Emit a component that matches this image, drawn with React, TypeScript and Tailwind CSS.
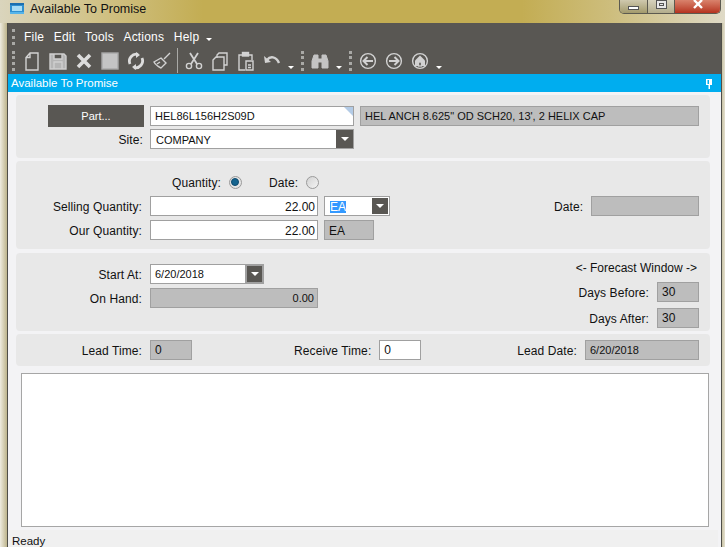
import type { ReactNode } from 'react';

const stroke = '#d2d2d2';

const Icon = ({ children }: { children: ReactNode }) => (
  <span className="w-[26px] h-[26px] flex items-center justify-center shrink-0">
    <svg width="20" height="20" viewBox="0 0 20 20" fill="none" stroke={stroke} strokeWidth="1.4">
      {children}
    </svg>
  </span>
);

const Grip = ({ className = '' }: { className?: string }) => (
  <div className={`w-[3px] border-l-[3px] border-dotted border-[#a9a9a6] shrink-0 ${className}`} />
);

const Caret = ({ className = '' }: { className?: string }) => (
  <span className={`block w-0 h-0 border-x-[3px] border-x-transparent border-t-[3px] border-t-white shrink-0 ${className}`} />
);

const Combo = ({ className = '' }: { className?: string }) => (
  <span className={`bg-[#595753] flex items-center justify-center shrink-0 ${className}`}>
    <Caret className="border-x-[4px] border-t-[4px]" />
  </span>
);

const Field = ({
  children,
  className = '',
  ro = false,
  right = false,
  small = false,
}: {
  children?: ReactNode;
  className?: string;
  ro?: boolean;
  right?: boolean;
  small?: boolean;
}) => (
  <div
    className={`h-[20px] border-[1px] border-[#a0a0a0] flex items-center px-[4px] leading-none shrink-0 ${
      small ? 'text-[11px]' : 'text-[12px]'
    } ${ro ? 'bg-[#bdbdbd]' : 'bg-white'} ${right ? 'justify-end' : ''} ${className}`}
  >
    {children}
  </div>
);

const Label = ({ children, className = '' }: { children: ReactNode; className?: string }) => (
  <span className={`text-[12px] leading-none tracking-[0.1px] pt-[2px] text-[#111] text-right shrink-0 ${className}`}>
    {children}
  </span>
);

const Radio = ({ on = false }: { on?: boolean }) => (
  <span
    className={`w-[13px] h-[13px] rounded-full border border-[#9a9a9a] flex items-center justify-center shrink-0 ${
      on ? 'bg-[#e4e4e4]' : 'bg-gradient-to-br from-[#d2d2d2] to-[#f4f4f4]'
    }`}
  >
    {on && <span className="w-[8px] h-[8px] rounded-full bg-[#15648f] border border-[#0d4a6e]" />}
  </span>
);

const Panel = ({ children, className = '' }: { children: ReactNode; className?: string }) => (
  <div className={`bg-[#e8e8e8] rounded-[4px] ${className}`}>{children}</div>
);

export default function App() {
  return (
    <div
      className="w-[728px] h-[547px] overflow-hidden flex flex-col bg-white text-[#111]"
      style={{ fontFamily: '"Liberation Sans", Arial, sans-serif' }}
    >
      {/* TITLE BAR */}
      <div className="h-[23px] w-[725px] shrink-0 flex bg-[linear-gradient(90deg,#dad5bd_0%,#d2c48c_12%,#c3ad53_28%,#c3ad53_72%,#cdbd7c_84%,#dfdac7_100%)]">
        <svg className="ml-[9px] mt-[2px]" width="16" height="14" viewBox="0 0 16 14">
          <rect x="1" y="1" width="14" height="11" rx="2" fill="#2f8fd0" />
          <rect x="3" y="4" width="10" height="5" fill="#a8dcf5" />
          <rect x="1" y="1" width="14" height="2" fill="#1c6fb0" />
          <rect x="1" y="10" width="14" height="2" fill="#55b4ea" />
        </svg>
        <span className="ml-[5px] mt-[2px] text-[12.5px] leading-[15px] text-[#111]">Available To Promise</span>
        <div className="ml-auto mr-[4px] w-[102px] h-[14px] flex border border-t-0 border-[#5c5a50] rounded-b-[5px] overflow-hidden">
          <div className="w-[28px] bg-gradient-to-b from-[#cfc9ae] to-[#a39a6c] border-r border-[#5c5a50] flex items-center justify-center">
            <span className="w-[11px] h-[4px] mt-[3px] bg-white border border-[#555]" />
          </div>
          <div className="w-[27px] bg-gradient-to-b from-[#d6d2bd] to-[#b3ad8c] border-r border-[#5c5a50] flex justify-center">
            <span className="w-[11px] h-[9px] bg-[#e8e8e8] border border-[#555] flex items-center justify-center">
              <span className="w-[5px] h-[3px] border border-[#555]" />
            </span>
          </div>
          <div className="flex-1 bg-gradient-to-b from-[#d9826c] to-[#b5311e] flex justify-center">
            <svg width="12" height="9" viewBox="0 0 12 9">
              <path d="M2 0 L10 8 M10 0 L2 8" stroke="#fff" strokeWidth="2.4" />
            </svg>
          </div>
        </div>
      </div>

      <div className="flex flex-1 min-h-0 w-[725px]">
        <div className="w-[8px] shrink-0 bg-gradient-to-r from-[#efece0] to-[#bdb48c] border-r border-[#4f4e48]" />

        <div className="w-[713px] shrink-0 flex flex-col bg-[#f3f3f5]">
          {/* MENU + TOOLBAR */}
          <div className="h-[51px] bg-[#595753] shrink-0 flex flex-col">
            <div className="h-[24px] flex items-center pl-[4px] pt-[3px]">
              <Grip className="h-[16px]" />
              <div className="flex items-center gap-[9.6px] ml-[9px] text-[12px] tracking-[0.2px] leading-none text-white">
                <span>File</span>
                <span>Edit</span>
                <span>Tools</span>
                <span>Actions</span>
                <span>Help</span>
              </div>
              <Caret className="ml-[7px] mt-[6px]" />
            </div>
            <div className="h-[27px] flex items-center pl-[4px]">
              <Grip className="h-[20px]" />
              <div className="w-[4px]" />
              <Icon>
                <path d="M8 2 H16 V19 H4 V6.5 Z M8 2 V6.5 H4" />
              </Icon>
              <Icon>
                <path
                  d="M2 3 H16 L18 5 V18 H2 Z M6 3 V8 H14 V3 M6 18 V11 H14 V18"
                  fill="#b5b5b5"
                  stroke="#cfcfcf"
                />
              </Icon>
              <Icon>
                <path d="M4 4 L16 16 M16 4 L4 16" strokeWidth="3.6" stroke="#dcdcdc" />
              </Icon>
              <Icon>
                <rect x="2" y="2" width="16" height="16" fill="#c4c4c4" stroke="#a8a8a8" />
              </Icon>
              <Icon>
                <path d="M4 13 A7 7 0 0 1 12 3.4 M16 7 A7 7 0 0 1 8 16.6" strokeWidth="2.8" stroke="#dcdcdc" />
                <path d="M10 1 L14 4 L10 7 Z M10 13 L6 16 L10 19 Z" fill="#dcdcdc" stroke="none" />
              </Icon>
              <Icon>
                <path d="M12 8 L18 2 M9 7 L14 12 L9 17 C7 16 3 13 2 11 Z M5 13 L8 11" />
              </Icon>
              <div className="w-[1px] h-[25px] bg-[#a9a9a6] ml-[2px] mr-[3px] shrink-0" />
              <Icon>
                <circle cx="5" cy="15" r="2.6" />
                <circle cx="15" cy="15" r="2.6" />
                <path d="M7 13 L14 2 M13 13 L6 2" strokeWidth="1.8" />
              </Icon>
              <Icon>
                <path d="M7 7 V4 L9 2 H17 V14 H14 M3 9 L6 6 H14 V19 H3 Z" />
              </Icon>
              <Icon>
                <path d="M6 4 H3 V19 H9 M13 4 H16 V9" />
                <rect x="6.5" y="1.5" width="6" height="3.5" fill="#d2d2d2" />
                <path d="M10 10 H17 V19 H10 Z M12 14 H15 M12 16.5 H15" fill="#595753" />
              </Icon>
              <Icon>
                <path d="M5 9 C8 5 14 5 17 12" strokeWidth="2.4" />
                <path d="M2 5 L3 12 L9 11 Z" fill={stroke} stroke="none" />
              </Icon>
              <Caret className="ml-[3px] mt-[14px]" />
              <Grip className="h-[20px] ml-[7px]" />
              <div className="w-[3px]" />
              <Icon>
                <path
                  d="M2 10 L4 4 H8 V8 H12 V4 H16 L18 10 V17 H12 V11 H8 V17 H2 Z"
                  fill="#c4c4c4"
                  stroke="#c4c4c4"
                  strokeWidth="1"
                />
              </Icon>
              <Caret className="ml-[3px] mt-[14px]" />
              <Grip className="h-[20px] ml-[7px]" />
              <div className="w-[3px]" />
              <Icon>
                <circle cx="10" cy="10" r="7.4" />
                <path d="M15 10 H6 M9.5 6 L5.5 10 L9.5 14" strokeWidth="2" />
              </Icon>
              <Icon>
                <circle cx="10" cy="10" r="7.4" />
                <path d="M5 10 H14 M10.5 6 L14.5 10 L10.5 14" strokeWidth="2" />
              </Icon>
              <Icon>
                <circle cx="10" cy="10" r="7.4" />
                <path d="M10 4.5 L15 9.5 V15 H5 V9.5 Z" fill="#d2d2d2" stroke="none" />
                <rect x="8.5" y="11" width="3" height="4" fill="#595753" />
              </Icon>
              <Caret className="ml-[3px] mt-[14px]" />
            </div>
          </div>

          {/* HEADER */}
          <div className="h-[18px] bg-[#00adef] shrink-0 flex items-center pl-[3px] pr-[8px] pt-[1px] text-[11.5px] leading-none text-white">
            <span>Available To Promise</span>
            <svg className="ml-auto" width="8" height="10" viewBox="0 0 8 10" fill="#fff">
              <path d="M1 0 H7 V6 H5 V10 H3.5 V6 H1 Z M2.5 1 V5 H4 V1 Z" fillRule="evenodd" />
            </svg>
          </div>

          {/* BODY */}
          <div className="flex-1 min-h-0 pl-[8px] pr-[11px] pt-[3px] flex flex-col">
            <Panel className="h-[63px] shrink-0 pt-[10px] pl-[32px]">
              <div className="flex items-center h-[22px]">
                <div className="w-[96px] h-[22px] bg-[#595753] text-white text-[11px] pt-[1px] flex items-center justify-center shrink-0">
                  Part...
                </div>
                <Field small className="ml-[6px] w-[204px] relative">
                  HEL86L156H2S09D
                  <span className="absolute top-0 right-0 w-0 h-0 border-l-[9px] border-l-transparent border-t-[9px] border-t-[#b3cbe6]" />
                </Field>
                <Field small ro className="ml-[6px] w-[339px]">
                  HEL ANCH 8.625&quot; OD SCH20, 13&apos;, 2 HELIX CAP
                </Field>
              </div>
              <div className="flex items-center mt-[2px]">
                <Label className="w-[95px]">Site:</Label>
                <Field small className="ml-[7px] w-[204px] !pl-[5px] !pr-0 pt-[2px]">
                  COMPANY
                  <Combo className="ml-auto w-[17px] h-[18px] -mt-[2px]" />
                </Field>
              </div>
            </Panel>

            <Panel className="h-[88px] mt-[3px] shrink-0 pt-[14px]">
              <div className="flex items-center h-[14px]">
                <Label className="ml-[156px]">Quantity:</Label>
                <span className="ml-[8px]">
                  <Radio on />
                </span>
                <Label className="ml-[27px]">Date:</Label>
                <span className="ml-[8px]">
                  <Radio />
                </span>
              </div>
              <div className="flex items-center h-[20px] mt-[7px]">
                <Label className="w-[126px]">Selling Quantity:</Label>
                <Field right className="ml-[8px] w-[168px] !pr-[2px] pt-[1px]">
                  22.00
                </Field>
                <Field className="ml-[6px] w-[66px] !pl-[5px] !pr-[1px] border-[#8fa0b5] pt-[1px]">
                  <span className="bg-[#3399ff] text-white">EA</span>
                  <Combo className="ml-auto w-[16px] h-[16px] -mt-[1px]" />
                </Field>
                <Label className="ml-[164px] w-[28px]">Date:</Label>
                <Field ro className="ml-[9px] w-[108px]" />
              </div>
              <div className="flex items-center h-[20px] mt-[4px]">
                <Label className="w-[126px]">Our Quantity:</Label>
                <Field right className="ml-[8px] w-[168px] !pr-[2px] pt-[1px]">
                  22.00
                </Field>
                <Field ro className="ml-[6px] w-[50px] pt-[1px]">
                  EA
                </Field>
              </div>
            </Panel>

            <Panel className="h-[78px] mt-[4px] shrink-0 flex justify-between pl-0 pr-[11px]">
              <div className="pt-[11px]">
                <div className="flex items-center h-[20px]">
                  <Label className="w-[126px]">Start At:</Label>
                  <Field small className="ml-[8px] w-[114px] !pr-0">
                    6/20/2018
                    <Combo className="ml-auto w-[15px] h-[16px] border-[2px] border-[#a0a0a0] box-content -mr-[1px]" />
                  </Field>
                </div>
                <div className="flex items-center h-[20px] mt-[4px]">
                  <Label className="w-[126px]">On Hand:</Label>
                  <Field small ro right className="ml-[8px] w-[168px] !pr-[3px]">
                    0.00
                  </Field>
                </div>
              </div>
              <div className="flex flex-col items-end pt-[8px]">
                <span className="text-[12px] leading-none mr-[2px] pt-[1px]">&lt;- Forecast Window -&gt;</span>
                <div className="flex items-center mt-[8px]">
                  <Label>Days Before:</Label>
                  <Field ro className="ml-[8px] w-[42px]">
                    30
                  </Field>
                </div>
                <div className="flex items-center mt-[6px]">
                  <Label>Days After:</Label>
                  <Field ro className="ml-[8px] w-[42px]">
                    30
                  </Field>
                </div>
              </div>
            </Panel>

            <Panel className="h-[32px] mt-[3px] shrink-0 flex items-center pr-[11px]">
              <Label className="w-[126px]">Lead Time:</Label>
              <Field ro className="ml-[8px] w-[42px]">
                0
              </Field>
              <Label className="ml-[102px]">Receive Time:</Label>
              <Field className="ml-[8px] w-[42px]">0</Field>
              <Label className="ml-auto">Lead Date:</Label>
              <Field small ro className="ml-[8px] w-[114px]">
                6/20/2018
              </Field>
            </Panel>

            <div className="h-[154px] mt-[7px] ml-[5px] mr-[1px] bg-white border border-[#a6a6a6] shrink-0" />

            <div className="mt-[3px] -mx-[8px] flex-1 bg-[#f0f0f0] flex items-end pl-[4px] text-[11.5px] leading-[13px] -mb-[1px]">
              Ready
            </div>
          </div>
        </div>

        <div className="w-[4px] shrink-0 bg-gradient-to-r from-[#c9c3a6] to-[#e4e0cf] border-l border-[#4f4e48]" />
      </div>
    </div>
  );
}
